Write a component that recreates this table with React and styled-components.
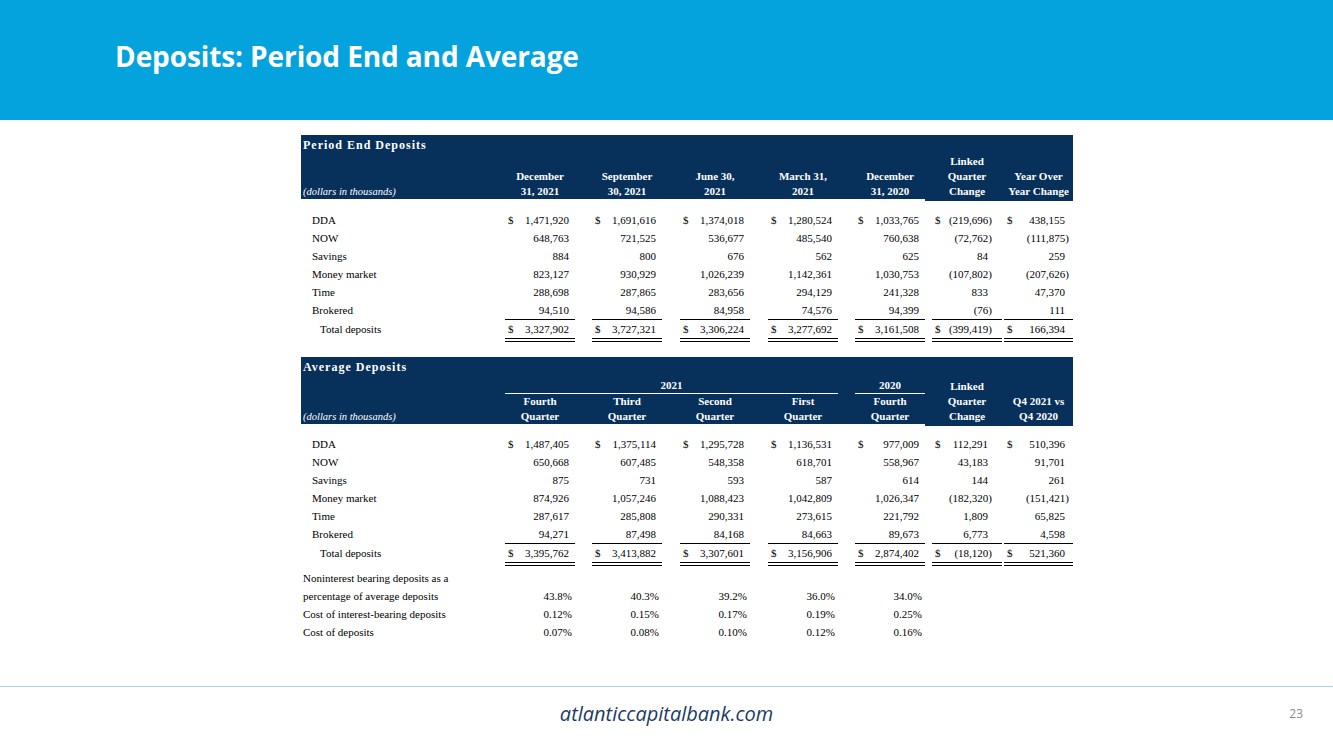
import React from 'react';
import styled, { createGlobalStyle, css } from 'styled-components';

const NAVY = '#07305a';
const COLS = '204px 70px 87px 88px 88px 87px 77px 71px';
const PAD_L = [0, 17, 18, 18, 17, 7, 2];
const PAD_R = [2, 2, 2, 2, 2, 10, 4];

const Global = createGlobalStyle`
  html, body { margin: 0; padding: 0; background: #fff; }
  body { width: 1333px; height: 749px; overflow: hidden; }
`;

const Page = styled.div`
  width: 1333px;
  height: 749px;
  display: flex;
  flex-direction: column;
  background: #fff;
`;

const Banner = styled.header`
  flex: none;
  height: 120px;
  box-sizing: border-box;
  padding: 37px 0 0 115px;
  background: #05a3de;
`;

const Title = styled.h1`
  margin: 0;
  font-family: "Open Sans", sans-serif;
  font-weight: 700;
  font-size: 28px;
  line-height: 38px;
  letter-spacing: -0.1px;
  color: #fff;
`;

const Main = styled.main`
  flex: 1;
  padding: 15px 0 0 301px;
  font-family: "Liberation Serif", "Times New Roman", serif;
  color: #000;
`;

const Section = styled.section`
  width: 772px;
  & + & { margin-top: 15px; }
`;

const Band = styled.div`
  display: grid;
  grid-template-columns: ${COLS};
  grid-template-rows: ${(p) => p.$rows};
  height: ${(p) => p.$h}px;
  background: ${NAVY};
  color: #fff;
`;

const BandTitle = styled.div`
  grid-column: 1 / -1;
  grid-row: 1;
  padding: 3px 0 0 2px;
  font-size: 12px;
  font-weight: 700;
  line-height: 15px;
  letter-spacing: 1px;
`;

const Units = styled.div`
  grid-column: 1;
  grid-row: ${(p) => p.$row};
  align-self: end;
  padding-left: 2px;
  font-size: 10.5px;
  font-style: italic;
  line-height: 15px;
`;

const HeadCell = styled.div`
  grid-column: ${(p) => p.$col + 2};
  grid-row: ${(p) => p.$row};
  align-self: end;
  padding-left: ${(p) => PAD_L[p.$col]}px;
  text-align: center;
  font-size: 11px;
  font-weight: 700;
  line-height: 15px;
  white-space: nowrap;
  ${(p) =>
    p.$ext &&
    css`
      margin-bottom: -2px;
      padding-bottom: 2px;
      background: ${NAVY};
    `}
`;

const GroupCell = styled.div`
  grid-column: ${(p) => p.$span};
  grid-row: 2;
  align-self: end;
  margin-left: ${(p) => p.$ml || 0}px;
  border-bottom: 1px solid #fff;
  text-align: center;
  font-size: 11px;
  font-weight: 700;
  line-height: 15px;
`;

const Body = styled.div`
  display: grid;
  grid-template-columns: ${COLS};
  padding-top: ${(p) => p.$pt}px;
  font-size: 11px;
  line-height: 18px;
`;

const RowLabel = styled.div`
  grid-column: 1;
  padding-left: ${(p) => p.$indent}px;
  white-space: nowrap;
`;

const Spacer = styled.div`
  grid-column: 1 / -1;
  height: ${(p) => p.$h}px;
`;

const Cell = styled.div`
  display: flex;
  padding-left: ${(p) => PAD_L[p.$col]}px;
`;

const Inner = styled.div`
  flex: 1;
  display: flex;
  justify-content: space-between;
  padding: 0 ${(p) => p.$pr}px 0 3px;
  ${(p) => p.$line === 'single' && css`border-bottom: 1px solid #000;`}
  ${(p) => p.$line === 'double' && css`border-bottom: 4px double #000;`}
`;

const Num = styled.span`
  padding-right: ${(p) => (p.$paren ? 0 : 4)}px;
`;

const Footer = styled.footer`
  flex: none;
  height: 63px;
  box-sizing: border-box;
  border-top: 1px solid #a6d5e4;
  display: grid;
  grid-template-columns: 1fr auto 1fr;
  padding-top: 16px;
`;

const Site = styled.div`
  grid-column: 2;
  font-family: "Open Sans", sans-serif;
  font-style: italic;
  font-size: 20px;
  line-height: 22px;
  color: #1d3a63;
`;

const PageNo = styled.div`
  grid-column: 3;
  justify-self: end;
  padding-right: 30px;
  font-family: "Open Sans", sans-serif;
  font-size: 12px;
  line-height: 22px;
  color: #8a8a8a;
`;

const periodRows = [
  ['DDA', ['$1,471,920', '$1,691,616', '$1,374,018', '$1,280,524', '$1,033,765', '$(219,696)', '$438,155']],
  ['NOW', ['648,763', '721,525', '536,677', '485,540', '760,638', '(72,762)', '(111,875)']],
  ['Savings', ['884', '800', '676', '562', '625', '84', '259']],
  ['Money market', ['823,127', '930,929', '1,026,239', '1,142,361', '1,030,753', '(107,802)', '(207,626)']],
  ['Time', ['288,698', '287,865', '283,656', '294,129', '241,328', '833', '47,370']],
  ['Brokered', ['94,510', '94,586', '84,958', '74,576', '94,399', '(76)', '111']],
  ['Total deposits', ['$3,327,902', '$3,727,321', '$3,306,224', '$3,277,692', '$3,161,508', '$(399,419)', '$166,394']],
];

const avgRows = [
  ['DDA', ['$1,487,405', '$1,375,114', '$1,295,728', '$1,136,531', '$977,009', '$112,291', '$510,396']],
  ['NOW', ['650,668', '607,485', '548,358', '618,701', '558,967', '43,183', '91,701']],
  ['Savings', ['875', '731', '593', '587', '614', '144', '261']],
  ['Money market', ['874,926', '1,057,246', '1,088,423', '1,042,809', '1,026,347', '(182,320)', '(151,421)']],
  ['Time', ['287,617', '285,808', '290,331', '273,615', '221,792', '1,809', '65,825']],
  ['Brokered', ['94,271', '87,498', '84,168', '84,663', '89,673', '6,773', '4,598']],
  ['Total deposits', ['$3,395,762', '$3,413,882', '$3,307,601', '$3,156,906', '$2,874,402', '$(18,120)', '$521,360']],
];

const ratioRows = [
  ['Noninterest bearing deposits as a', null],
  ['percentage of average deposits', ['43.8%', '40.3%', '39.2%', '36.0%', '34.0%']],
  ['Cost of interest-bearing deposits', ['0.12%', '0.15%', '0.17%', '0.19%', '0.25%']],
  ['Cost of deposits', ['0.07%', '0.08%', '0.10%', '0.12%', '0.16%']],
];

const periodHeads = [
  ['December', '31, 2021'],
  ['September', '30, 2021'],
  ['June 30,', '2021'],
  ['March 31,', '2021'],
  ['December', '31, 2020'],
  ['Linked', 'Quarter', 'Change'],
  ['Year Over', 'Year Change'],
];

function Value({ col, value, line }) {
  const dollar = value.startsWith('$');
  const num = dollar ? value.slice(1) : value;
  const pct = num.endsWith('%');
  const paren = num.endsWith(')');
  return (
    <Cell $col={col}>
      <Inner $line={line} $pr={pct ? 3 : PAD_R[col]}>
        <span>{dollar ? '$' : ''}</span>
        <Num $paren={paren || pct}>{num}</Num>
      </Inner>
    </Cell>
  );
}

function DataRows({ rows }) {
  return rows.map(([label, vals], i) => {
    const total = i === rows.length - 1;
    const line = total ? 'double' : i === rows.length - 2 ? 'single' : null;
    return (
      <React.Fragment key={label}>
        <RowLabel $indent={total ? 19 : 11}>{label}</RowLabel>
        {vals.map((v, c) => (
          <Value key={c} col={c} value={v} line={line} />
        ))}
      </React.Fragment>
    );
  });
}

export default function App() {
  return (
    <Page>
      <Global />
      <Banner>
        <Title>Deposits: Period End and Average</Title>
      </Banner>
      <Main>
        <Section>
          <Band $h={64} $rows="18px 46px">
            <BandTitle>Period End Deposits</BandTitle>
            <Units $row={2}>(dollars in thousands)</Units>
            {periodHeads.map((lines, c) => (
              <HeadCell key={c} $col={c} $row={2} $ext={c >= 5}>
                {lines.map((l, k) => (
                  <div key={k}>{l}</div>
                ))}
              </HeadCell>
            ))}
          </Band>
          <Body $pt={12}>
            <DataRows rows={periodRows} />
          </Body>
        </Section>
        <Section>
          <Band $h={67} $rows="21px 16px 30px">
            <BandTitle>Average Deposits</BandTitle>
            <GroupCell $span="2 / 6">2021</GroupCell>
            <GroupCell $span="6" $ml={17}>2020</GroupCell>
            <Units $row={3}>(dollars in thousands)</Units>
            {['Fourth', 'Third', 'Second', 'First', 'Fourth'].map((w, c) => (
              <HeadCell key={c} $col={c} $row={3}>
                <div>{w}</div>
                <div>Quarter</div>
              </HeadCell>
            ))}
            <HeadCell $col={5} $row="2 / 4" $ext>
              <div>Linked</div>
              <div>Quarter</div>
              <div>Change</div>
            </HeadCell>
            <HeadCell $col={6} $row={3} $ext>
              <div>Q4 2021 vs</div>
              <div>Q4 2020</div>
            </HeadCell>
          </Band>
          <Body $pt={11}>
            <DataRows rows={avgRows} />
            <Spacer $h={3} />
            {ratioRows.map(([label, vals]) => (
              <React.Fragment key={label}>
                <RowLabel $indent={2}>{label}</RowLabel>
                {vals
                  ? vals.map((v, c) => <Value key={c} col={c} value={v} />)
                  : <Spacer $h={0} />}
              </React.Fragment>
            ))}
          </Body>
        </Section>
      </Main>
      <Footer>
        <Site>atlanticcapitalbank.com</Site>
        <PageNo>23</PageNo>
      </Footer>
    </Page>
  );
}
